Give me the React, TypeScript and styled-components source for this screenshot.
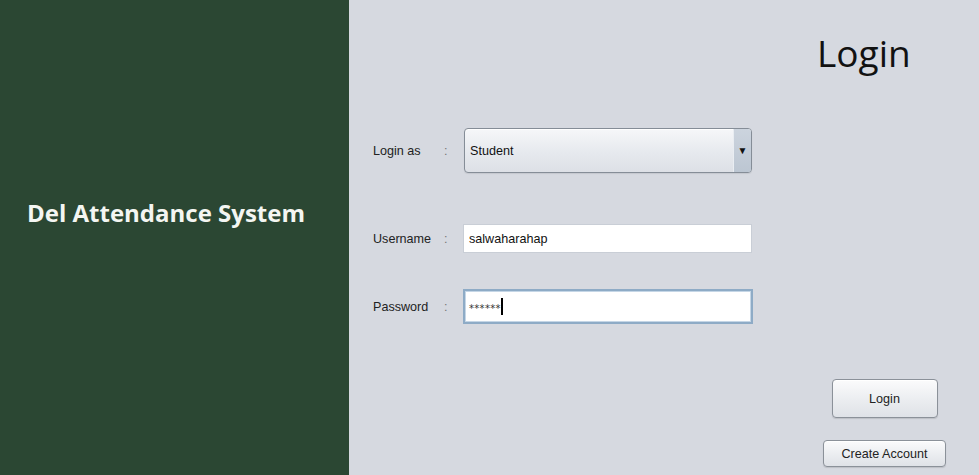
import React from "react";
import styled, { createGlobalStyle } from "styled-components";

const Global = createGlobalStyle`
  html, body { margin: 0; padding: 0; }
  body { width: 979px; height: 475px; overflow: hidden; font-family: "Liberation Sans", Arial, sans-serif; }
`;

const Page = styled.div`
  display: grid;
  grid-template-columns: 349px 1fr;
  width: 979px;
  height: 475px;
`;

const Sidebar = styled.aside`
  background: #2b4733;
  padding: 198px 0 0 27px;
  box-sizing: border-box;
`;

const Brand = styled.h1`
  margin: 0;
  color: #f4f6f2;
  font-family: "Open Sans", "Noto Sans", sans-serif;
  font-weight: 700;
  font-size: 24px;
  line-height: 30px;
  letter-spacing: 0px;
`;

const Main = styled.main`
  background: #d6d9e0;
  display: flex;
  flex-direction: column;
  box-sizing: border-box;
  padding-top: 35px;
`;

const Title = styled.h2`
  margin: 0 0 0 468px;
  font-family: "Open Sans", "Noto Sans", sans-serif;
  font-weight: 400;
  font-size: 37px;
  line-height: 36px;
  color: #111;
`;

const Form = styled.div`
  display: flex;
  flex-direction: column;
  margin: 57px 0 0 24px;
`;

const Row = styled.div<{ $gap: number }>`
  display: grid;
  grid-template-columns: 71px 19px 289px;
  align-items: center;
  margin-top: ${(p) => p.$gap}px;
  font-size: 12.6px;
  color: #222;
`;

const Label = styled.span`
  white-space: nowrap;
`;

const Colon = styled.span`
  color: #777;
`;

const Combo = styled.div`
  display: flex;
  height: 45px;
  box-sizing: border-box;
  margin-left: 1px;
  border: 1px solid #858d97;
  border-radius: 4px;
  background: linear-gradient(#f6f7f9, #e6e9ee 55%, #dde0e6);
  box-shadow: inset 0 1px 0 #fff, 0 1px 1px rgba(0, 0, 0, 0.08);
  overflow: hidden;
`;

const ComboText = styled.span`
  flex: 1;
  display: flex;
  align-items: center;
  padding-left: 5px;
  font-size: 12.6px;
  color: #111;
`;

const ComboArrow = styled.span`
  width: 17px;
  display: flex;
  align-items: center;
  justify-content: center;
  border-left: 1px solid #e9edf2;
  background: linear-gradient(#ccd4de, #bcc6d2);
  font-size: 10px;
  color: #111;
`;

const TextField = styled.div<{ $focused?: boolean }>`
  display: flex;
  align-items: center;
  box-sizing: border-box;
  height: ${(p) => (p.$focused ? 35 : 29)}px;
  width: ${(p) => (p.$focused ? 290 : 289)}px;
  padding-left: ${(p) => (p.$focused ? 4 : 5)}px;
  background: #fff;
  border: ${(p) => (p.$focused ? "2px solid #8eabc6" : "1px solid #c9ced6")};
  box-shadow: ${(p) => (p.$focused ? "inset 0 0 0 1px #c5d6e6" : "none")};
  font-size: 12.6px;
  color: #111;
`;

const Stars = styled.span`
  font-family: "DejaVu Sans", sans-serif;
  font-size: 10px;
  line-height: 10px;
  letter-spacing: 0.3px;
  color: #333;
  padding-top: 5px;
`;

const Caret = styled.span`
  display: inline-block;
  width: 2px;
  height: 17px;
  background: #000;
  margin-left: 0px;
`;

const Actions = styled.div`
  display: flex;
  flex-direction: column;
  align-items: center;
  width: 123px;
  margin: 55px 0 0 474px;
  gap: 22px;
`;

const Button = styled.button<{ $w: number; $h: number }>`
  width: ${(p) => p.$w}px;
  height: ${(p) => p.$h}px;
  box-sizing: border-box;
  border: 1px solid #8b9199;
  border-radius: 4px;
  background: linear-gradient(#fbfbfc, #eceef1 50%, #dfe2e7);
  box-shadow: inset 0 1px 0 #fff, 0 1px 1px rgba(0, 0, 0, 0.12);
  font-family: "Liberation Sans", Arial, sans-serif;
  font-size: 12.6px;
  color: #222;
  padding: 0;
`;

export default function App() {
  return (
    <>
      <Global />
      <Page>
        <Sidebar>
          <Brand>Del Attendance System</Brand>
        </Sidebar>
        <Main>
          <Title>Login</Title>
          <Form>
            <Row $gap={0}>
              <Label>Login as</Label>
              <Colon>:</Colon>
              <Combo>
                <ComboText>Student</ComboText>
                <ComboArrow>▼</ComboArrow>
              </Combo>
            </Row>
            <Row $gap={51}>
              <Label>Username</Label>
              <Colon>:</Colon>
              <TextField>salwaharahap</TextField>
            </Row>
            <Row $gap={36}>
              <Label>Password</Label>
              <Colon>:</Colon>
              <TextField $focused>
                <Stars>******</Stars>
                <Caret />
              </TextField>
            </Row>
          </Form>
          <Actions>
            <Button $w={106} $h={39}>Login</Button>
            <Button $w={123} $h={27}>Create Account</Button>
          </Actions>
        </Main>
      </Page>
    </>
  );
}
